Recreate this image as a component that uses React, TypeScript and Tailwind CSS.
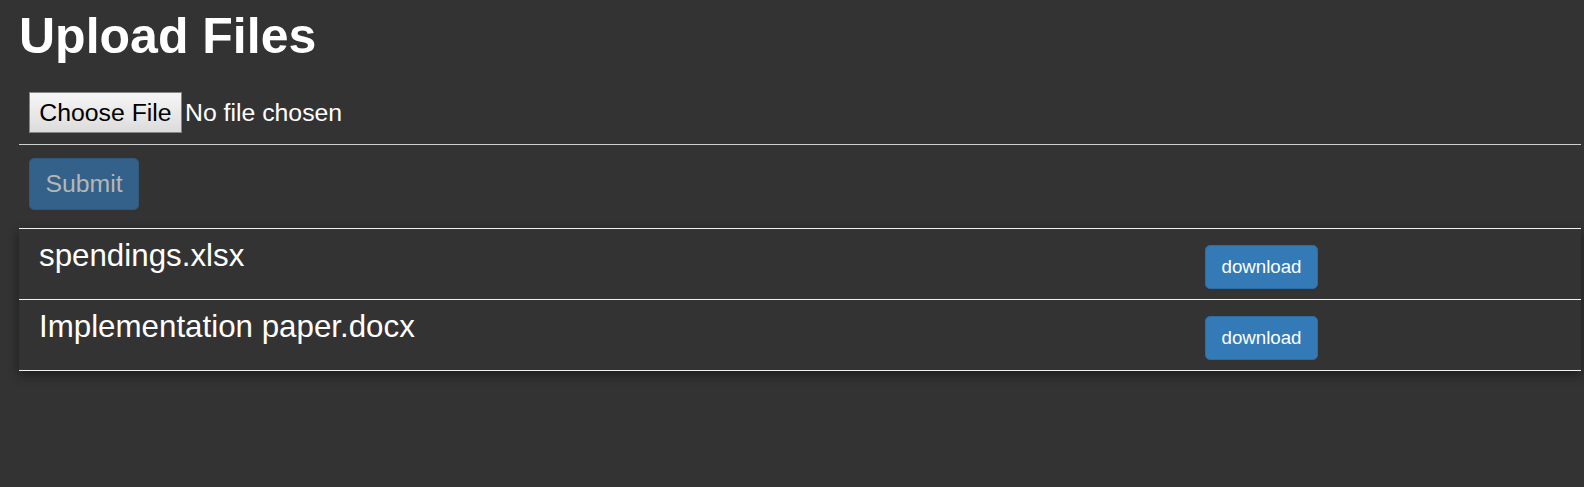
import React from "react";

const files = ["spendings.xlsx", "Implementation paper.docx"];

export default function App() {
  return (
    <div
      className="min-h-[487px] w-full bg-[#333333] text-white pl-[19px] pr-[3px]"
      style={{ fontFamily: '"Liberation Sans", Arial, sans-serif' }}
    >
      <h1 className="pt-[8px] text-[50px] font-bold leading-[57px]">Upload Files</h1>
      <div className="mt-[27px] flex items-center pl-[10px]">
        <div className="flex h-[41px] w-[153px] items-center justify-center border border-[#858585] bg-gradient-to-b from-[#f6f6f6] to-[#dcdcdc] text-[24.8px] text-black">
          Choose File
        </div>
        <span className="ml-[3px] text-[24.8px] text-white">No file chosen</span>
      </div>
      <div className="mt-[11px] border-t border-[#cfcfcf] pl-[10px] pt-[13px] pb-[18px]">
        <div className="flex h-[52px] w-[110px] items-center justify-center rounded-[5px] border border-[#30597c] bg-[#33618a] text-[24.8px] text-[#b6b6b6]">
          Submit
        </div>
      </div>
      <div className="border-t border-[#f2f2f2] shadow-[0_4px_10px_rgba(0,0,0,0.45)]">
        {files.map((f) => (
          <div key={f} className="grid h-[71px] grid-cols-[1186px_1fr] border-b border-[#f2f2f2]">
            <div className="pl-[20px] pt-[9px] text-[31.3px] leading-[36px]">{f}</div>
            <div className="pt-[16px]">
              <div className="flex h-[44px] w-[113px] items-center justify-center rounded-[5px] border border-[#2e6da4] bg-[#337ab7] text-[18.7px] text-white">
                download
              </div>
            </div>
          </div>
        ))}
      </div>
    </div>
  );
}
